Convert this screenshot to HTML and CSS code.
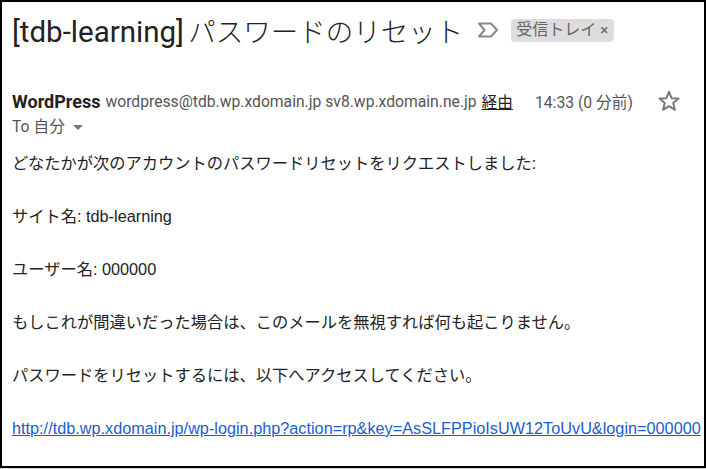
FILE: index.html
```html
<!DOCTYPE html>
<html lang="ja">
<head>
<meta charset="utf-8">
<link rel="stylesheet" href="styles.css">
</head>
<body>
<div class="frame">
  <div class="subject-row">
    <h1 class="subject"><span class="subject-latin">[tdb-learning]</span> <span class="subject-jp">パスワードのリセット</span></h1>
    <svg class="important" width="22" height="16" viewBox="0 0 22 16"><path d="M2 1.5 H14 L20 8 L14 14.5 H2 L7.5 8 Z" fill="none" stroke="#8a8a8a" stroke-width="2" stroke-linejoin="round"/></svg>
    <span class="chip">受信トレイ <span class="chip-x">×</span></span>
  </div>
  <div class="sender-row">
    <span class="sender-name">WordPress</span>
    <span class="sender-mail">wordpress@tdb.wp.xdomain.jp sv8.wp.xdomain.ne.jp</span>
    <span class="via">経由</span>
    <span class="time">14:33 (0 分前)</span>
    <svg class="star" width="24" height="24" viewBox="0 0 24 24"><path d="M12 2.8 L14.6 9.2 L21.5 9.6 L16.2 14 L17.9 20.8 L12 17.1 L6.1 20.8 L7.8 14 L2.5 9.6 L9.4 9.2 Z" fill="none" stroke="#7a7a7a" stroke-width="2" stroke-linejoin="round"/></svg>
  </div>
  <div class="to-row">To 自分 <span class="caret"></span></div>
  <div class="body">
    <p>どなたかが次のアカウントのパスワードリセットをリクエストしました:</p>
    <p>サイト名: tdb-learning</p>
    <p>ユーザー名: 000000</p>
    <p>もしこれが間違いだった場合は、このメールを無視すれば何も起こりません。</p>
    <p>パスワードをリセットするには、以下へアクセスしてください。</p>
    <p><a class="link" href="#">http://tdb.wp.xdomain.jp/wp-login.php?action=rp&amp;key=AsSLFPPioIsUW12ToUvU&amp;login=000000</a></p>
  </div>
</div>
</body>
</html>
```
FILE: styles.css
```css
html, body {
  margin: 0;
  padding: 0;
  background: #fff;
}
body {
  width: 706px;
  height: 469px;
  overflow: hidden;
  border-bottom: 1px solid #d8d8d8;
  box-sizing: border-box;
}
.frame {
  box-sizing: border-box;
  width: 706px;
  height: 468px;
  border: 2px solid #000;
  padding: 0 0 0 10px;
  overflow: hidden;
  font-family: Roboto, "Noto Sans CJK JP", sans-serif;
}
.subject-row {
  display: flex;
  align-items: center;
  height: 38px;
  margin-top: 9px;
}
.subject {
  margin: 0;
  font-weight: 400;
  font-size: 29.5px;
  color: #222;
  font-family: Roboto, "Noto Sans CJK JP", sans-serif;
  white-space: nowrap;
  word-spacing: -3px;
}
.subject-jp {
  font-size: 27.5px;
  font-weight: 300;
  word-spacing: 0;
}
.important {
  margin-left: 14px;
}
.chip {
  margin-left: 12px;
  background: #ddd;
  border-radius: 4px;
  color: #666;
  font-size: 16px;
  padding: 1px 6px 2px 5px;
  line-height: 20px;
  white-space: nowrap;
}
.chip-x {
  font-size: 15px;
  color: #666;
}
.sender-row {
  display: flex;
  align-items: center;
  margin-top: 40px;
  height: 24px;
  white-space: nowrap;
}
.sender-name {
  font-weight: 700;
  font-size: 18px;
  color: #222;
}
.sender-mail {
  margin-left: 5px;
  font-size: 15.7px;
  color: #555;
}
.via {
  margin-left: 5px;
  font-size: 15.7px;
  color: #222;
  text-decoration: underline;
}
.time {
  margin-left: 22px;
  font-size: 15.7px;
  color: #555;
}
.star {
  margin-left: 24px;
}
.to-row {
  margin-top: 3px;
  height: 22px;
  line-height: 22px;
  font-size: 15.7px;
  color: #555;
  display: flex;
  align-items: center;
}
.caret {
  display: inline-block;
  margin-left: 8px;
  width: 0;
  height: 0;
  border-left: 5px solid transparent;
  border-right: 5px solid transparent;
  border-top: 5px solid #777;
}
.body {
  margin-top: 12px;
  font-family: "Liberation Sans", "Noto Sans CJK JP", sans-serif;
  font-size: 16.25px;
  color: #222;
}
.body p {
  margin: 0 0 27px;
  line-height: 26px;
  white-space: nowrap;
}
.link {
  color: #1a5dd0;
  text-decoration: underline;
}
```
